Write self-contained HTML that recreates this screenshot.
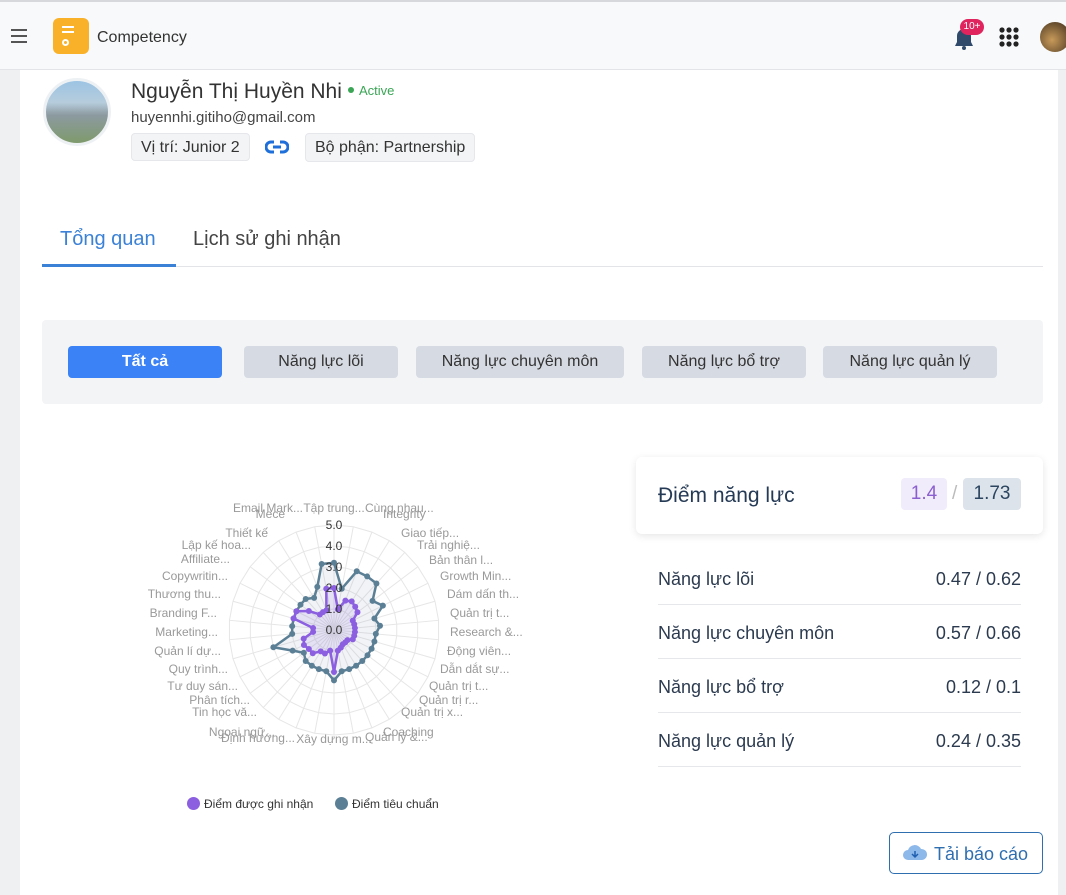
<!DOCTYPE html>
<html><head><meta charset="utf-8"><style>
*{box-sizing:border-box;margin:0;padding:0}
body{width:1066px;height:895px;overflow:hidden;background:#f3f4f6;font-family:"Liberation Sans","Noto Sans CJK SC",sans-serif;color:#2b3440;position:relative}
.top{position:absolute;left:0;top:0;width:1066px;height:70px;background:#f8f9fa;border-top:2px solid #d6d8db;border-bottom:1px solid #e2e4e7}
.main{position:absolute;left:20px;top:70px;width:1038px;height:825px;background:#fff}
.abs{position:absolute}
.tag{position:absolute;background:#f3f4f6;border:1px solid #e5e7eb;border-radius:4px;font-size:16px;color:#333;padding:0 9px;height:28px;line-height:27px}
.fb{position:absolute;top:346px;height:32px;border-radius:4px;background:#d6dae2;color:#333;font-size:16px;text-align:center;line-height:32px}
.row{position:absolute;left:658px;width:363px;height:54px;border-bottom:1px solid #e5e7eb;font-size:18px;color:#2b3a4f;line-height:56px}
.row span{float:right}
</style></head><body>
<div class="top">
 <div class="abs" style="left:11px;top:27px;width:16px;height:2px;background:#555;box-shadow:0 6px 0 #555,0 12px 0 #555"></div>
 <div class="abs" style="left:53px;top:16px;width:36px;height:36px;border-radius:6px;background:#f9b12a"></div>
 <div class="abs" style="left:62px;top:24px;width:12px;height:2px;background:#fff;box-shadow:0 5px 0 #fff"></div>
 <div class="abs" style="left:62px;top:37px;width:7px;height:7px;border-radius:50%;border:2px solid #fff"></div>
 <div class="abs" style="left:97px;top:27px;font-size:16px;color:#333">Competency</div>
 <svg class="abs" style="left:952px;top:24px" width="24" height="26"><path d="M3 20h18l-2-4V10a7 7 0 0 0-14 0v6z" fill="#2f4a6b"/><circle cx="12" cy="22" r="2" fill="#2f4a6b"/></svg>
 <div class="abs" style="left:960px;top:17px;width:24px;height:16px;border-radius:8px;background:#e0245e;color:#fff;font-size:10px;text-align:center;line-height:16px">10+</div>
 <svg class="abs" style="left:999px;top:25px" width="21" height="21"><g fill="#222"><circle cx="3" cy="3" r="2.6"/><circle cx="10" cy="3" r="2.6"/><circle cx="17" cy="3" r="2.6"/><circle cx="3" cy="10" r="2.6"/><circle cx="10" cy="10" r="2.6"/><circle cx="17" cy="10" r="2.6"/><circle cx="3" cy="17" r="2.6"/><circle cx="10" cy="17" r="2.6"/><circle cx="17" cy="17" r="2.6"/></g></svg>
 <div class="abs" style="left:1040px;top:20px;width:30px;height:30px;border-radius:50%;background:radial-gradient(circle at 40% 60%,#c89a5a,#3a2a1a)"></div>
</div>
<div class="abs" style="left:0;top:70px;width:20px;height:825px;background:#eef0f2"></div>
<div class="abs" style="left:1058px;top:70px;width:8px;height:825px;background:#eef0f2"></div>
<div class="main"></div>
<div class="abs" style="left:43px;top:78px;width:68px;height:68px;border-radius:50%;border:3px solid #eef1f4;background:linear-gradient(#9cc4e4 0%,#b6ccdc 35%,#8c9aa0 55%,#7f9a6c 100%)"></div>
<div class="abs" style="left:131px;top:80px;font-size:21px;color:#333">Nguyễn Thị Huyền Nhi</div>
<div class="abs" style="left:348px;top:87px;width:6px;height:6px;border-radius:50%;background:#3aa655"></div>
<div class="abs" style="left:359px;top:83px;font-size:13px;color:#3aa655">Active</div>
<div class="abs" style="left:131px;top:109px;font-size:15px;color:#444">huyennhi.gitiho@gmail.com</div>
<div class="tag" style="left:131px;top:133px">Vị trí: Junior 2</div>
<svg class="abs" style="left:265px;top:139px" width="24" height="16"><g fill="none" stroke="#1e6fd9" stroke-width="3"><path d="M9 3H6a5 5 0 0 0 0 10h3"/><path d="M15 3h3a5 5 0 0 1 0 10h-3"/><path d="M8 8h8"/></g></svg>
<div class="tag" style="left:305px;top:133px;height:29px">Bộ phận: Partnership</div>
<div class="abs" style="left:60px;top:228px;font-size:20px;color:#3b82d6">Tổng quan</div>
<div class="abs" style="left:193px;top:228px;font-size:20px;color:#444">Lịch sử ghi nhận</div>
<div class="abs" style="left:42px;top:266px;width:1001px;height:1px;background:#e2e4e7"></div>
<div class="abs" style="left:42px;top:264px;width:134px;height:3px;background:#3b82d6"></div>
<div class="abs" style="left:42px;top:320px;width:1001px;height:84px;background:#f3f4f6;border-radius:4px"></div>
<div class="fb" style="left:68px;width:154px;background:#3b82f6;color:#fff;font-weight:bold">Tất cả</div>
<div class="fb" style="left:244px;width:154px">Năng lực lõi</div>
<div class="fb" style="left:416px;width:208px">Năng lực chuyên môn</div>
<div class="fb" style="left:642px;width:164px">Năng lực bổ trợ</div>
<div class="fb" style="left:823px;width:174px">Năng lực quản lý</div>
<div class="abs" style="left:636px;top:457px;width:407px;height:77px;background:#fff;border-radius:6px;box-shadow:0 2px 8px rgba(0,0,0,.1)"></div>
<div class="abs" style="left:658px;top:484px;font-size:21px;color:#253a55">Điểm năng lực</div>
<div class="abs" style="left:901px;top:478px;width:46px;height:32px;background:#f1ecfb;border-radius:4px;color:#8b5fd0;font-size:19px;text-align:center;line-height:32px">1.4</div>
<div class="abs" style="left:952px;top:483px;color:#bbb;font-size:19px">/</div>
<div class="abs" style="left:963px;top:478px;width:58px;height:32px;background:#dde3ea;border-radius:4px;color:#2b4560;font-size:19px;text-align:center;line-height:32px">1.73</div>
<div class="row" style="top:551px">Năng lực lõi<span>0.47 / 0.62</span></div>
<div class="row" style="top:605px">Năng lực chuyên môn<span>0.57 / 0.66</span></div>
<div class="row" style="top:659px">Năng lực bổ trợ<span>0.12 / 0.1</span></div>
<div class="row" style="top:713px">Năng lực quản lý<span>0.24 / 0.35</span></div>
<div class="abs" style="left:889px;top:832px;width:154px;height:42px;border:1px solid #2f6fb0;border-radius:5px;font-size:18px;color:#2f6fb0;line-height:42px;padding-left:44px">Tải báo cáo</div>
<svg class="abs" style="left:902px;top:843px" width="26" height="20"><path d="M6 17a5 5 0 0 1 0-10 7 7 0 0 1 13-1 5 5 0 0 1 1 11z" fill="#8db8ea"/><path d="M13 8v6M10 11l3 3 3-3" stroke="#1e5fb0" stroke-width="1.5" fill="none"/></svg>
<svg id="r" class="abs" style="left:0;top:0" width="1066" height="895" font-family="Liberation Sans, sans-serif"></svg>
<div class="abs" style="left:187px;top:797px;width:13px;height:13px;border-radius:50%;background:#8b5fe0"></div>
<div class="abs" style="left:204px;top:797px;font-size:12px;color:#333">Điểm được ghi nhận</div>
<div class="abs" style="left:335px;top:797px;width:13px;height:13px;border-radius:50%;background:#5b7f95"></div>
<div class="abs" style="left:352px;top:797px;font-size:12px;color:#333">Điểm tiêu chuẩn</div>
<script>
var cx=334,cy=630,R=105,N=34,s='';
function pt(i,v){var a=-Math.PI/2+i*2*Math.PI/N,r=v/5*R;return [cx+r*Math.cos(a),cy+r*Math.sin(a)];}
for(var k=1;k<=5;k++){var p=[];for(var i=0;i<N;i++)p.push(pt(i,k).join(','));s+='<polygon points="'+p.join(' ')+'" fill="none" stroke="#e6e6e6"/>';}
for(var i=0;i<N;i++){var q=pt(i,5);s+='<line x1="'+cx+'" y1="'+cy+'" x2="'+q[0]+'" y2="'+q[1]+'" stroke="#e6e6e6"/>';}
var std=[3.2,2,3,3,3,2.3,2.6,2,2.2,2,2,2,2,2,2,2,2,2.4,2,2,2,2,1.8,2.2,3,2,2,2,2,2,2,1.8,2.2,3.2];
var rec=[2,1,1.5,1.6,1.5,1.4,1,1,1,1,1,1,0.8,0.8,0.8,0.9,1,2,1,1.2,1.2,1.5,1.5,1.6,1.5,1,1,2,2,1.5,1,1,1,2];
function poly(d,c,f){var p=[];for(var i=0;i<N;i++)p.push(pt(i,d[i]).join(','));var o='<polygon points="'+p.join(' ')+'" fill="'+f+'" stroke="'+c+'" stroke-width="2.5"/>';for(var i=0;i<N;i++){var q=pt(i,d[i]);o+='<circle cx="'+q[0]+'" cy="'+q[1]+'" r="3" fill="'+c+'"/>';}return o;}
s+=poly(std,'#5b7f95','rgba(120,140,180,0.1)');s+=poly(rec,'#8b5fe0','rgba(139,95,224,0.12)');
['0.0','1.0','2.0','3.0','4.0','5.0'].forEach(function(t,k){s+='<text x="334" y="'+(634-k*21)+'" text-anchor="middle" font-size="12" fill="#333">'+t+'</text>';});
var L=[["Tập trung...",334,512,"middle"],["Cùng nhau...",365,512],["Integrity",383,518],["Giao tiếp...",401,537],["Trải nghiệ...",417,549],["Bản thân l...",429,564],["Growth Min...",440,580],["Dám dấn th...",447,598],["Quản trị t...",450,617],["Research &...",450,636],["Động viên...",447,655],["Dẫn dắt sự...",440,673],["Quản trị t...",429,690],["Quản trị r...",419,704],["Quản trị x...",401,716],["Coaching",383,736],["Quản lý &...",365,741],["Xây dựng m...",334,743,"middle"],["Định hướng...",295,742,"end"],["Ngoại ngữ...",275,736,"end"],["Tin học vă...",257,716,"end"],["Phân tích...",250,704,"end"],["Tư duy sán...",238,690,"end"],["Quy trình...",228,673,"end"],["Quản lí dự...",221,655,"end"],["Marketing...",218,636,"end"],["Branding F...",217,617,"end"],["Thương thu...",221,598,"end"],["Copywritin...",228,580,"end"],["Affiliate...",230,563,"end"],["Lập kế hoa...",251,549,"end"],["Thiết kế",268,537,"end"],["Mece",285,518,"end"],["Email Mark...",303,512,"end"]];
L.forEach(function(l){s+='<text x="'+l[1]+'" y="'+l[2]+'" text-anchor="'+(l[3]||'start')+'" font-size="12" fill="#999">'+l[0]+'</text>';});
document.getElementById('r').innerHTML=s;
</script>
</body></html>
